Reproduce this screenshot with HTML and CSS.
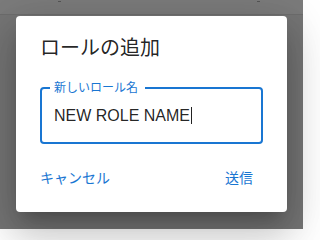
FILE: index.html
```html
<!DOCTYPE html>
<html lang="ja">
<head>
<meta charset="utf-8">
<link rel="stylesheet" href="styles.css">
</head>
<body>
<div class="page">
  <div class="topbar"><span class="mark"></span><span class="mark mark-right"></span></div>
  <div class="rest"></div>
</div>
<div class="dialog">
  <h2 class="title">ロールの追加</h2>
  <div class="content">
    <div class="field">
      <span class="label">新しいロール名</span>
      <div class="input">NEW ROLE NAME<span class="caret"></span></div>
    </div>
  </div>
  <div class="actions">
    <button class="btn">キャンセル</button>
    <button class="btn">送信</button>
  </div>
</div>
</body>
</html>
```

FILE: styles.css
```css
html, body {
  margin: 0;
  padding: 0;
  width: 303px;
  height: 229px;
  overflow: hidden;
  font-family: "Liberation Sans", "Noto Sans CJK JP", sans-serif;
}
.page {
  display: flex;
  flex-direction: column;
  height: 229px;
  background: #757575;
}
.topbar {
  height: 14px;
  background: #7b7b7b;
  border-bottom: 1px solid #6d6d6d;
  display: flex;
  align-items: flex-start;
  padding: 0 43px 0 58px;
}
.mark {
  width: 3px;
  height: 1px;
  margin-top: 1px;
  background: #555;
}
.mark-right {
  margin-left: auto;
}
.rest {
  flex: 1;
}
.dialog {
  position: absolute;
  left: 16px;
  top: 16px;
  width: 271px;
  height: 196px;
  background: #fff;
  border-radius: 4px;
  box-shadow: 0px 11px 15px -7px rgba(0,0,0,0.2), 0px 24px 38px 3px rgba(0,0,0,0.14), 0px 9px 46px 8px rgba(0,0,0,0.12);
  display: flex;
  flex-direction: column;
}
.title {
  margin: 0;
  padding: 16px 24px 0;
  font-size: 20px;
  font-weight: 400;
  line-height: 32px;
  color: rgba(0,0,0,0.87);
}
.content {
  padding: 23px 24px 16px;
}
.field {
  position: relative;
  height: 57px;
  border: 2px solid #1976d2;
  border-radius: 4px;
  box-sizing: border-box;
  display: flex;
  align-items: center;
  padding: 0 12px;
}
.label {
  position: absolute;
  left: 8px;
  top: -10px;
  padding: 0 7px 0 4px;
  background: #fff;
  color: #1976d2;
  font-size: 12px;
  line-height: 18px;
}
.input {
  font-size: 16px;
  line-height: 20px;
  color: rgba(0,0,0,0.87);
  display: flex;
  align-items: center;
}
.caret {
  display: inline-block;
  width: 1px;
  height: 17px;
  background: #222;
  margin-left: 1px;
}
.actions {
  display: flex;
  justify-content: space-between;
  padding: 0 16px 16px;
}
.btn {
  font-family: inherit;
  font-size: 14px;
  line-height: 24px;
  height: 36px;
  min-width: 64px;
  padding: 6px 8px;
  border: 0;
  background: transparent;
  color: #1976d2;
  border-radius: 4px;
}
```
